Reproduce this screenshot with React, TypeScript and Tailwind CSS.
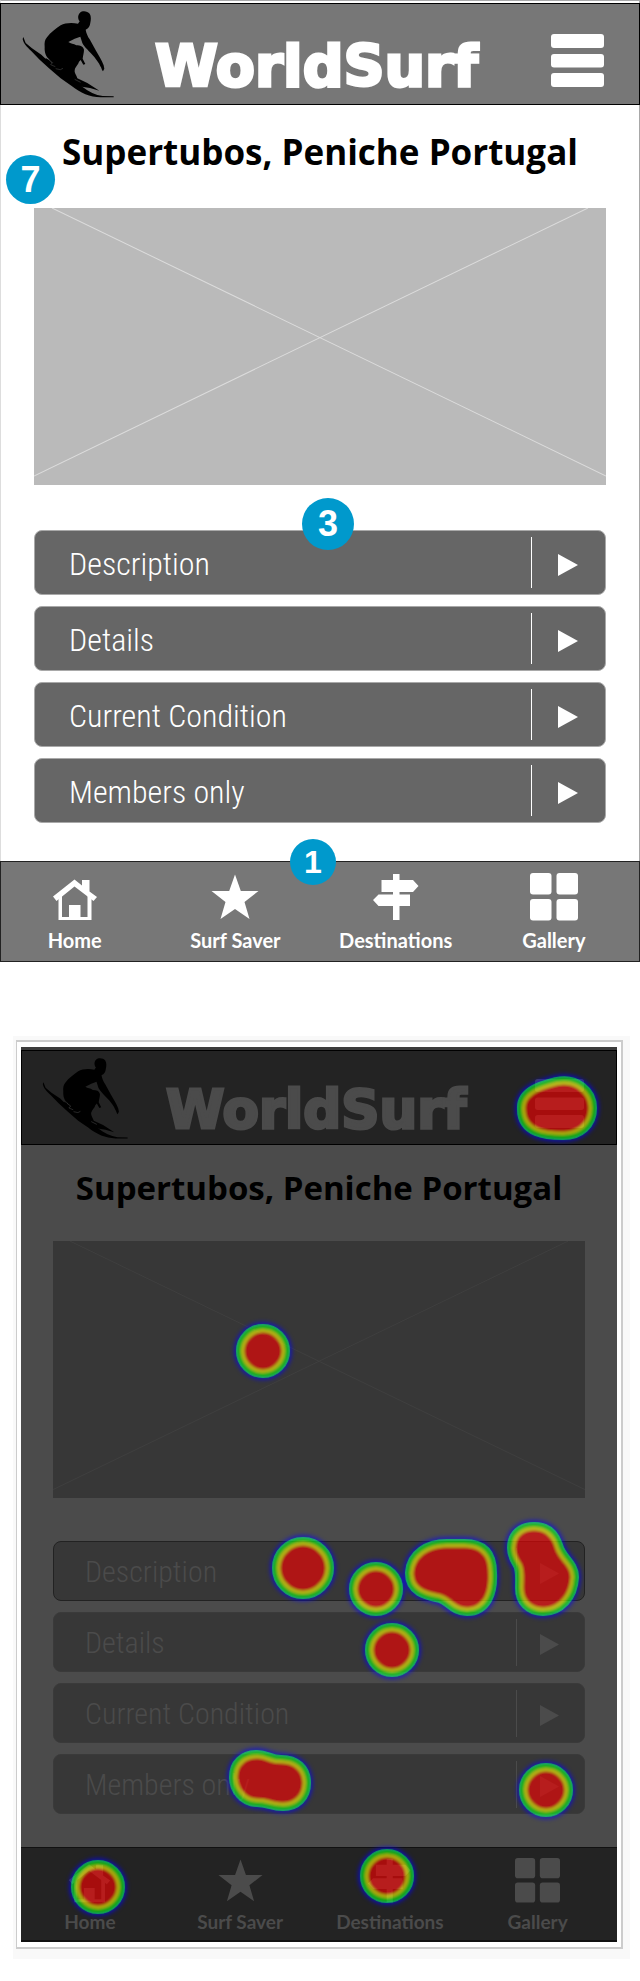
import type { ReactNode } from 'react';

type Size = 'full' | 'small';

const full = {
  screen: 'relative border-x border-l-[#dddddd] border-r-[#a8a8a8] bg-white border-t border-t-[#a8a8aa] pt-[2px]',
  header: '-mx-px flex h-[102px] items-center border border-black bg-[#777777] pl-[21px] pr-[35px] text-white',
  surfer: 'h-[88px] w-[93px] shrink-0',
  brand: 'ml-[40px] mt-6 text-[57px] leading-[64px]',
  menu: 'ml-auto mt-3 h-[53px] w-[53px] shrink-0',
  title: 'relative flex h-[103px] items-center justify-center pb-[10px] text-[35px] leading-[48px] text-black',
  photo: 'block h-[277px] w-full',
  photoFill: '#bababa',
  photoLine: '#dcdcdc',
  inner: 'px-[33px]',
  list: 'relative mt-[45px] flex flex-col gap-[11px]',
  row: 'flex h-[65px] w-full items-center rounded-lg border border-[#a9a9a9] bg-[#666666] pl-[34px] text-left text-[32px] leading-10 text-white',
  firstRow: 'border-[#858585]',
  divider: 'ml-auto h-[51px] w-px shrink-0 bg-white',
  arrow: 'ml-[26px] mr-[27px] mt-1 h-[22px] w-[20px] shrink-0',
  nav: 'relative -mx-px mt-[38px] h-[101px] border border-[#222222] bg-[#777777] text-white',
  navGrid: 'grid h-full grid-cols-[148fr_175fr_147fr_171fr] pt-3',
  navIcon: 'h-[48px] w-[48px]',
  navText: 'mt-1 text-[20px] leading-7',
};

const small: typeof full = {
  screen: 'relative border-t-[3px] border-t-[#3c3c3c] bg-[#4b4b4b]',
  header: 'flex h-[95px] items-center border border-black bg-[#232323] pl-[20px] pr-[32px] text-[#4b4b4b]',
  surfer: 'h-[82px] w-[87px] shrink-0',
  brand: 'ml-[37px] mt-6 text-[53px] leading-[60px]',
  menu: 'ml-auto mt-3 h-[49px] w-[49px] shrink-0',
  title: 'relative flex h-[96px] items-center justify-center pb-[10px] text-[33px] leading-[44px] text-black',
  photo: 'block h-[257px] w-full',
  photoFill: '#373737',
  photoLine: '#404040',
  inner: 'px-[32px]',
  list: 'relative mt-[43px] flex flex-col gap-[11px]',
  row: 'flex h-[60px] w-full items-center rounded-lg border border-[#3a3a3a] bg-[#373737] pl-[31px] text-left text-[30px] leading-9 text-[#4b4b4b]',
  firstRow: 'border-[#222222]',
  divider: 'ml-auto h-[47px] w-px shrink-0 bg-[#4b4b4b]',
  arrow: 'ml-[23px] mr-[25px] mt-1 h-[21px] w-[19px] shrink-0',
  nav: 'relative mt-[33px] h-[95px] border-y border-t-[#111111] border-b-2 border-b-[#111111] bg-[#232323] text-[#4b4b4b]',
  navGrid: 'grid h-full grid-cols-[138fr_163fr_137fr_159fr] pt-[11px]',
  navIcon: 'h-[45px] w-[45px]',
  navText: 'mt-1 text-[19px] leading-7',
};

const styles = { full, small };

function Surfer({ className }: { className: string }) {
  return (
    <svg viewBox="66 38 279 264" className={className} fill="black" aria-hidden="true">
      <path d="M240 46C247 39 263 41 269 49C274 57 273 67 271 76C270 86 266 93 257 97C259 108 263 117 269 126L288 160C297 176 305 187 311 204L313 214L309 222C305 219 305 212 301 207C297 196 289 188 283 179C269 163 252 148 247 137L241 118L224 124L205 134C212 140 221 138 229 144C241 144 249 147 252 157C252 167 249 174 248 184L256 200L250 202L242 188L237 193C235 202 227 207 224 216C222 226 228 231 232 243L262 257L298 280L270 272L245 268L219 266L200 246L176 234L160 219L142 201L148 197L156 198L146 184C137 178 133 163 134 150C133 136 134 128 141 120C151 106 168 94 182 84C195 76 217 75 234 79L239 72C232 62 234 52 240 46Z" />
      <path d="M70 119L77 137L96 153L124 172L143 190L168 210L196 228L220 248L247 268C267 283 286 293 308 296L341 297L341 300L302 300C270 299 241 287 214 265L182 243L147 213L119 187L93 160C82 150 70 138 68 125Z" />
      <path d="M137 182l14 8l8 16l-10 6l-13-15z" />
      <path d="M205 208l20 0l-4 22l12 18l-30 4l-2-18z" />
      <path d="M150 196l24 14l28 0l0 30l-26-8z" />
      <g fill="none" stroke="#555" strokeWidth="1.5">
        <path d="M146 187l12 9l-6 6l14 6M167 214l14 3l8-4M224 246l18 9" />
      </g>
    </svg>
  );
}

function MenuIcon() {
  return (
    <svg viewBox="0 0 53 53" className="h-full w-full" fill="currentColor" aria-hidden="true">
      <rect width="53" height="14" rx="3" />
      <rect y="20" width="53" height="13.5" rx="3" />
      <rect y="39" width="53" height="14" rx="3" />
    </svg>
  );
}

const navItems: { label: string; icon: ReactNode }[] = [
  {
    label: 'Home',
    icon: (
      <>
        <path d="M2 22.500L23.500 5.500L31 11.500V6H38.500V17.500L46 23L42.500 27L23.500 12.500L5.500 27Z" />
        <path d="M7.500 24L11 21V43H18V31H29.500V43H36.500V21L40.500 24V46H7.500Z" />
      </>
    ),
  },
  {
    label: 'Surf Saver',
    icon: <path d="M24 .5L29.800 17H47.500L33.500 28L38.500 45L24 35L9.500 45L14.500 28L.5 17H18.200Z" />,
  },
  {
    label: 'Destinations',
    icon: (
      <path d="M21 0H27.500V6H41L46.500 12L41 18H27.500V20.500H38V32H27.500V46H21V32H6.500L1 26L6.500 20.500H21V18H9.500V6H21Z" />
    ),
  },
  {
    label: 'Gallery',
    icon: (
      <>
        <rect x="0" y="-1" width="21.500" height="21.500" rx="3" />
        <rect x="26.500" y="-1" width="21.500" height="21.500" rx="3" />
        <rect x="0" y="25" width="21.500" height="21.500" rx="3" />
        <rect x="26.500" y="25" width="21.500" height="21.500" rx="3" />
      </>
    ),
  },
];

const rows = ['Description', 'Details', 'Current Condition', 'Members only'];

function Badge({ className, children }: { className: string; children: ReactNode }) {
  return (
    <span
      className={`absolute flex items-center justify-center rounded-full bg-[#0099cc] font-['Liberation_Sans',sans-serif] font-bold text-white ${className}`}
    >
      {children}
    </span>
  );
}

function Screen({ size, badges = false, children }: { size: Size; badges?: boolean; children?: ReactNode }) {
  const s = styles[size];
  return (
    <section className={s.screen}>
      <header className={s.header}>
        <Surfer className={s.surfer} />
        <div
          className={`${s.brand} font-['DejaVu_Sans',sans-serif] font-bold [-webkit-text-stroke:3px_currentColor]`}
        >
          WorldSurf
        </div>
        <button type="button" aria-label="Menu" className={s.menu}>
          <MenuIcon />
        </button>
      </header>

      <div className={s.title}>
        <h1 className="whitespace-nowrap font-['Open_Sans',sans-serif] font-bold">Supertubos, Peniche Portugal</h1>
        {badges && <Badge className="left-[5px] top-[50px] h-[49px] w-[49px] text-[36px]">7</Badge>}
      </div>

      <div className={s.inner}>
        <svg viewBox="0 0 571 276" preserveAspectRatio="none" className={s.photo} aria-hidden="true">
          <rect width="571" height="276" fill={s.photoFill} />
          <path d="M18 0L571 267M553 0L0 267" stroke={s.photoLine} fill="none" />
        </svg>
        <div className={s.list}>
          {rows.map((label, i) => (
            <button
              key={label}
              type="button"
              className={`${s.row} ${i === 0 ? s.firstRow : ''} font-['Roboto_Condensed','Roboto',sans-serif] font-light`}
            >
              <span className="mt-0.5">{label}</span>
              <span className={s.divider} />
              <svg viewBox="0 0 20 22" className={s.arrow} fill="currentColor" aria-hidden="true">
                <path d="M0 0L20 11L0 22Z" />
              </svg>
            </button>
          ))}
          {badges && <Badge className="-top-8 left-[268px] h-[52px] w-[52px] text-[36px]">3</Badge>}
        </div>
      </div>

      <nav className={s.nav}>
        <div className={s.navGrid}>
          {navItems.map((item) => (
            <a key={item.label} href="#" className="flex flex-col items-center">
              <svg viewBox="0 0 48 48" className={`${s.navIcon} overflow-visible`} fill="currentColor" aria-hidden="true">
                {item.icon}
              </svg>
              <span className={`${s.navText} whitespace-nowrap font-['Lato',sans-serif] font-bold`}>{item.label}</span>
            </a>
          ))}
        </div>
        {badges && <Badge className="-top-[23px] left-[289px] h-[46px] w-[46px] text-[32px]">1</Badge>}
      </nav>
      {children}
    </section>
  );
}

const spot = (x: number, y: number, r: number) =>
  `M${x - r} ${y}a${r} ${r} 0 1 0 ${r * 2} 0a${r} ${r} 0 1 0 ${-r * 2} 0Z`;

const heat = [
  'M505 62C504 48 520 43 536 39C554 35 567 47 567 61C567 75 557 84 542 84C525 84 505 82 505 62Z',
  spot(242, 304, 18),
  spot(282, 521, 22),
  spot(355, 542, 18),
  'M393 526C394 510 408 501 426 501H443C460 501 467 509 467 526C468 545 462 560 446 560C434 560 431 551 420 547C407 544 393 542 393 526Z',
  'M495 501C495 490 502 484 513 484C524 484 530 490 533 499C537 514 549 518 549 530C548 548 537 560 522 560C510 560 503 552 503 541C503 532 504 524 501 517C498 512 495 508 495 501Z',
  spot(371, 603, 18),
  'M217 730C217 719 224 712 236 712C245 712 248 717 260 717C273 717 281 724 281 736C281 748 273 755 262 755C251 755 248 751 236 751C225 751 217 741 217 730Z',
  spot(525, 743, 18),
  spot(77, 840, 18),
  spot(366, 829, 18),
].join('');

function HeatMap() {
  return (
    <svg
      viewBox="0 0 596 895"
      className="pointer-events-none absolute inset-x-0 -top-[3px] w-full opacity-60"
      strokeLinejoin="round"
      aria-hidden="true"
    >
      <defs>
        <filter id="glow" x="-10%" y="-10%" width="120%" height="120%">
          <feGaussianBlur stdDeviation="2" />
        </filter>
        <filter id="soft" x="-10%" y="-10%" width="120%" height="120%">
          <feGaussianBlur stdDeviation="0.8" />
        </filter>
      </defs>
      <path d={heat} fill="#0000ff" stroke="#0000ff" strokeWidth="22" filter="url(#glow)" />
      <path d={heat} fill="#00e0c0" stroke="#00e0c0" strokeWidth="18" />
      <g filter="url(#soft)">
        <path d={heat} fill="#10ff10" stroke="#10ff10" strokeWidth="16" />
        <path d={heat} fill="#ffff00" stroke="#ffff00" strokeWidth="8" />
        <path d={heat} fill="#ff0000" stroke="#ff0000" strokeWidth="1" />
      </g>
    </svg>
  );
}

export default function App() {
  return (
    <main className="bg-white pb-[22px]">
      <Screen size="full" badges />
      <div className="ml-[13px] mr-[10px] mt-[74px] bg-[#f9f9f9] pb-[10px] pl-[3px] pr-[7px] pt-1">
        <div className="border-2 border-l border-[#cccccc] bg-white px-1 py-[5px]">
          <Screen size="small">
            <HeatMap />
          </Screen>
        </div>
      </div>
    </main>
  );
}
